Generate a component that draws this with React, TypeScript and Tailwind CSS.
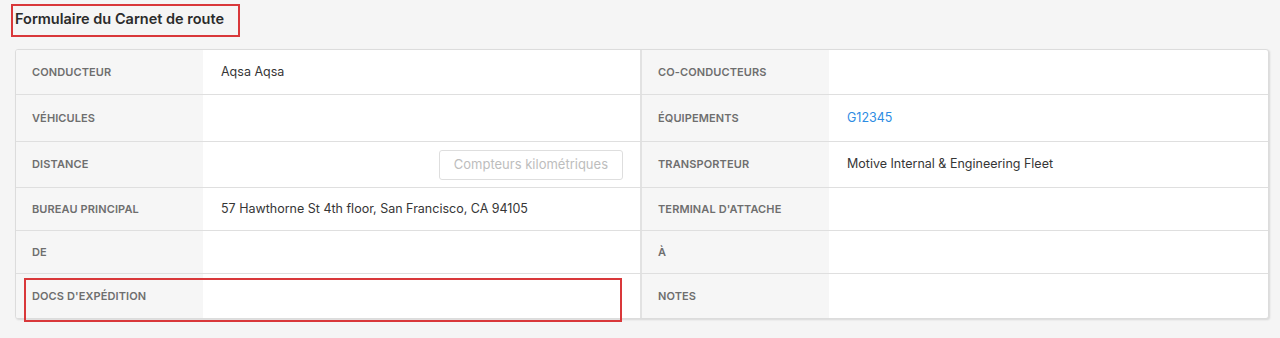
import React from "react";

// One half of a row: label cell + value cell
interface Field {
    label: string;
    value?: React.ReactNode;
}

interface Row {
    left: Field;
    right: Field;
    height: string;
}

const rows: Row[] = [
    { left: { label: "Conducteur", value: "Aqsa Aqsa" }, right: { label: "Co-conducteurs" }, height: "h-[45px]" },
    {
        left: { label: "Véhicules" },
        right: { label: "Équipements", value: <span className="text-[#2d8ce3]">G12345</span> },
        height: "h-[47px]",
    },
    {
        left: {
            label: "Distance",
            value: (
                <div className="flex justify-end pr-[17px]">
                    <button className="h-[30px] px-[14px] border border-[#dedede] rounded-[3px] bg-white text-[#bdbdbd] text-[13px]">
                        Compteurs kilométriques
                    </button>
                </div>
            ),
        },
        right: { label: "Transporteur", value: "Motive Internal & Engineering Fleet" },
        height: "h-[46px]",
    },
    {
        left: { label: "Bureau principal", value: "57 Hawthorne St 4th floor, San Francisco, CA 94105" },
        right: { label: "Terminal d'attache" },
        height: "h-[43px]",
    },
    { left: { label: "De" }, right: { label: "À" }, height: "h-[43px]" },
    { left: { label: "Docs d'expédition" }, right: { label: "Notes" }, height: "h-[44px]" },
];

const Cell: React.FC<{ field: Field; labelWidth: string }> = ({ field, labelWidth }) => (
    <div className="flex flex-1 items-stretch">
        <div className={`${labelWidth} shrink-0 bg-[#f6f6f6] flex items-center pl-4 text-[11px] font-semibold uppercase text-[#6e6e6e] tracking-[0.01em]`}>
            {field.label}
        </div>
        <div className="flex-1 flex items-center pl-[18px] text-[12.5px] text-[#363636]">
            <div className="w-full">{field.value}</div>
        </div>
    </div>
);

const App: React.FC = () => {
    return (
        <div className="relative w-full h-[338px] bg-[#f5f5f5] font-['Inter',sans-serif] px-[15px] pt-[8px]">
            <h2 className="text-[14.5px] font-semibold text-[#2b2b2b] h-[21px] leading-[21px]">Formulaire du Carnet de route</h2>

            <div className="mt-[20px] w-[1254px] bg-white border border-[#dcdcdc] rounded-[3px] shadow-[1px_1px_2px_rgba(0,0,0,0.12)] overflow-hidden">
                {rows.map((row, i) => (
                    <div
                        key={i}
                        className={`flex ${row.height} ${i < rows.length - 1 ? "border-b border-[#dfdfdf]" : ""}`}
                    >
                        <div className="w-[626px] flex border-r-2 border-[#e2e2e2]">
                            <Cell field={row.left} labelWidth="w-[187px]" />
                        </div>
                        <div className="flex-1 flex">
                            <Cell field={row.right} labelWidth="w-[187px]" />
                        </div>
                    </div>
                ))}
            </div>

            {/* annotation boxes drawn on the screenshot */}
            <div className="absolute left-[11px] top-[4px] w-[229px] h-[33px] border-2 border-[#d9383a]" />
            <div className="absolute left-[24px] top-[278px] w-[598px] h-[44px] border-2 border-[#d9383a]" />
        </div>
    );
};

export default App;
